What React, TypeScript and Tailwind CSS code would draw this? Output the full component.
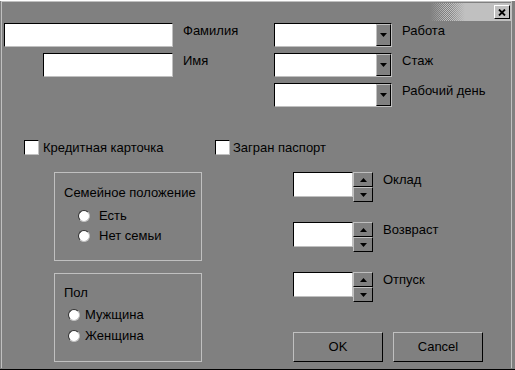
import React from "react";

function TextBox({ className = "" }: { className?: string }) {
  return (
    <div
      className={`mt-px h-[24px] border border-t-black border-l-black border-r-[#c0c0c0] border-b-[#c0c0c0] bg-white ${className}`}
    />
  );
}

function Arrow({ up = false }: { up?: boolean }) {
  return (
    <svg width="7" height="4" viewBox="0 0 7 4">
      <polygon points={up ? "3.5,0 7,4 0,4" : "0,0 7,0 3.5,4"} fill="#000" />
    </svg>
  );
}

function Combo() {
  return (
    <div className="mt-px flex h-[24px] w-[118px] border border-t-black border-l-black border-r-[#c0c0c0] border-b-[#c0c0c0] bg-white">
      <div className="flex-1" />
      <div className="flex h-[22px] w-[15px] items-center justify-center border border-t-[#c0c0c0] border-l-[#c0c0c0] border-r-black border-b-black bg-[#808080]">
        <Arrow />
      </div>
    </div>
  );
}

function Check({ label, gap }: { label: string; gap: string }) {
  return (
    <>
      <div className="h-[15px] w-[15px] border border-t-black border-l-black border-r-[#c0c0c0] border-b-[#c0c0c0] bg-white" />
      <span className={gap}>{label}</span>
    </>
  );
}

function Radio({ label, offset, gap }: { label: string; offset: string; gap: string }) {
  return (
    <div className={`flex h-[14px] items-center ${offset}`}>
      <div className="h-[12px] w-[12px] rounded-full border border-t-[#303030] border-l-[#303030] border-r-[#c0c0c0] border-b-[#c0c0c0] bg-white" />
      <span className={gap}>{label}</span>
    </div>
  );
}

function Spinner({ label }: { label: string }) {
  return (
    <div className="flex h-[30px] items-start">
      <div className="h-[25px] w-[60px] border border-t-black border-l-black border-r-[#c0c0c0] border-b-[#c0c0c0] bg-white" />
      <div className="flex w-[20px] flex-col">
        <div className="flex h-[15px] items-center justify-center border border-t-[#c0c0c0] border-l-[#c0c0c0] border-r-black border-b-black bg-[#808080]">
          <Arrow up />
        </div>
        <div className="flex h-[15px] items-center justify-center border border-t-[#c0c0c0] border-l-[#c0c0c0] border-r-black border-b-black bg-[#808080]">
          <Arrow />
        </div>
      </div>
      <span className="ml-[10px] mt-px">{label}</span>
    </div>
  );
}

function PushButton({ label }: { label: string }) {
  return (
    <div className="flex h-[30px] w-[90px] items-center justify-center border border-t-[#c0c0c0] border-l-[#c0c0c0] border-r-black border-b-black">
      {label}
    </div>
  );
}

export default function App() {
  return (
    <div className="box-border h-[370px] w-[515px] border-b-2 border-black bg-[#808080] font-['Liberation_Sans',Arial,sans-serif] text-[13px] leading-[14px] text-black">
      <div className="ml-px mt-px flex h-[367px] w-[511px] flex-col border-l border-r border-t border-[#c0c0c0]">
        {/* title strip */}
        <div className="mt-px flex h-[18px] justify-end">
          <div className="flex h-[18px] w-[81px] bg-[#c0c0c0]">
            <div className="relative h-full w-[35px] bg-[repeating-conic-gradient(#c0c0c0_0_25%,#808080_0_50%)] bg-[length:2px_2px]">
              <div className="absolute inset-0 bg-[linear-gradient(to_right,#808080_0%,rgba(128,128,128,0)_45%,rgba(192,192,192,0)_55%,#c0c0c0_100%)]" />
            </div>
            <div className="flex-1" />
            <div className="mr-px mt-[2px] flex h-[14px] w-[16px] items-center justify-center border border-t-white border-l-white border-r-black border-b-black bg-[#c0c0c0]">
              <svg width="8" height="7" viewBox="0 0 8 7">
                <path d="M1 0.5 L7 6.5 M7 0.5 L1 6.5" stroke="#000" strokeWidth="1.8" />
              </svg>
            </div>
          </div>
        </div>

        {/* row 1 */}
        <div className="mt-px flex h-[25px]">
          <TextBox className="ml-[2px] w-[169px]" />
          <span className="ml-[10px] mt-[2px] w-[90px]">Фамилия</span>
          <div className="ml-px">
            <Combo />
          </div>
          <span className="ml-[10px] mt-[2px]">Работа</span>
        </div>

        {/* row 2 */}
        <div className="mt-[5px] flex h-[25px]">
          <TextBox className="ml-[41px] w-[130px]" />
          <span className="ml-[10px] mt-[2px] w-[90px]">Имя</span>
          <div className="ml-px">
            <Combo />
          </div>
          <span className="ml-[10px] mt-[2px]">Стаж</span>
        </div>

        {/* row 3 */}
        <div className="mt-[5px] flex h-[25px]">
          <div className="ml-[272px]">
            <Combo />
          </div>
          <span className="ml-[10px] mt-[2px]">Рабочий день</span>
        </div>

        {/* checkboxes */}
        <div className="mt-[33px] flex h-[15px] items-center pl-[22px]">
          <Check label="Кредитная карточка" gap="ml-[4px] w-[172px]" />
          <Check label="Загран паспорт" gap="ml-[3px]" />
        </div>

        <div className="mt-[17px] flex items-start">
          {/* left column */}
          <div className="ml-[52px] flex w-[148px] flex-col">
            <div className="h-[89px] border border-[#c0c0c0] pl-[9px] pt-[13px]">
              <div>Семейное положение</div>
              <div className="mt-[9px]">
                <Radio label="Есть" offset="ml-[14px]" gap="ml-[9px]" />
              </div>
              <div className="mt-[6px]">
                <Radio label="Нет семьи" offset="ml-[14px]" gap="ml-[9px]" />
              </div>
            </div>
            <div className="mt-[12px] h-[89px] border border-[#c0c0c0] pl-[9px] pt-[12px]">
              <div>Пол</div>
              <div className="mt-[8px]">
                <Radio label="Мужщина" offset="ml-[4px]" gap="ml-[5px]" />
              </div>
              <div className="mt-[7px]">
                <Radio label="Женщина" offset="ml-[4px]" gap="ml-[5px]" />
              </div>
            </div>
          </div>

          {/* right column */}
          <div className="ml-[91px] flex flex-col">
            <Spinner label="Оклад" />
            <div className="mt-[20px]">
              <Spinner label="Возвраст" />
            </div>
            <div className="mt-[20px]">
              <Spinner label="Отпуск" />
            </div>
            <div className="mt-[30px] flex gap-[10px]">
              <PushButton label="OK" />
              <PushButton label="Cancel" />
            </div>
          </div>
        </div>
      </div>
    </div>
  );
}
